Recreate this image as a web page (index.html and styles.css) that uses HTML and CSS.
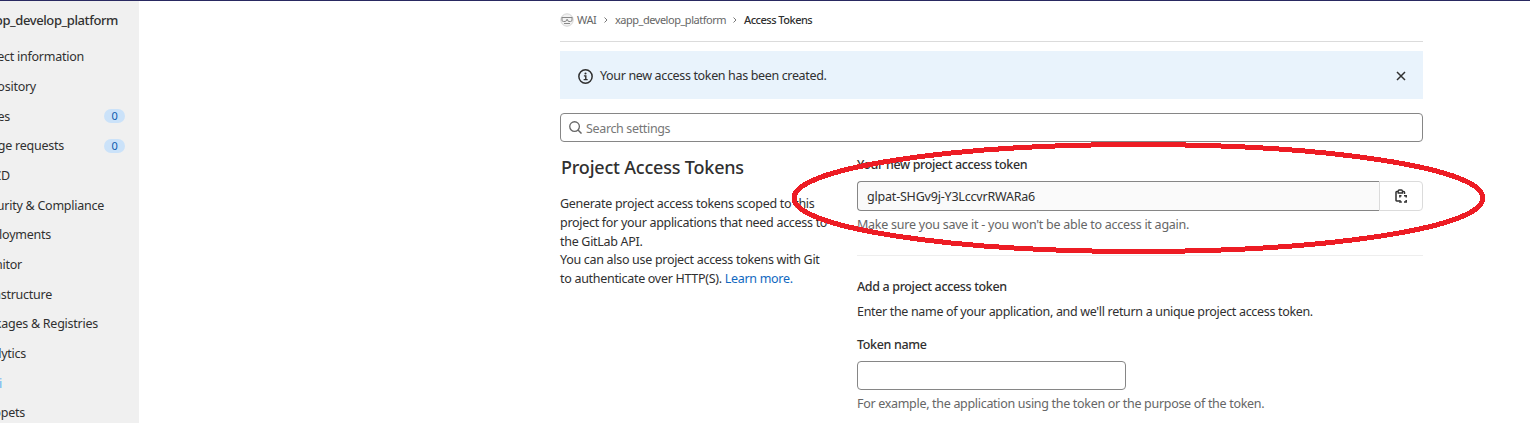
FILE: index.html
```html
<!DOCTYPE html>
<html lang="en">
<head>
<meta charset="utf-8">
<title>Access Tokens</title>
<link rel="stylesheet" href="styles.css">
</head>
<body>
<div class="page">
  <aside class="sidebar">
    <div class="project"><span style="width:118px">xapp_develop_platform</span></div>
    <nav class="nav">
      <a class="item"><span style="width:84px">Project information</span></a>
      <a class="item"><span style="width:36px">Repository</span></a>
      <a class="item"><span style="width:10px">Issues</span><b class="count">0</b></a>
      <a class="item"><span style="width:64px">Merge requests</span><b class="count">0</b></a>
      <a class="item"><span style="width:10px">CI/CD</span></a>
      <a class="item"><span style="width:104px">Security &amp; Compliance</span></a>
      <a class="item"><span style="width:51px">Deployments</span></a>
      <a class="item"><span style="width:22px">Monitor</span></a>
      <a class="item"><span style="width:52px">Infrastructure</span></a>
      <a class="item"><span style="width:98px">Packages &amp; Registries</span></a>
      <a class="item"><span style="width:26px">Analytics</span></a>
      <a class="item current"><span style="width:2px">Wiki</span></a>
      <a class="item"><span style="width:25px">Snippets</span></a>
    </nav>
  </aside>
  <main class="content">
    <nav class="crumbs">
      <svg class="avatar" viewBox="0 0 14 14"><circle cx="7" cy="7" r="6.2" fill="#f2f2f2" stroke="#d4d4d4"/><path d="M1.500 4.500h11M2 5v2.200q0 1.300 1.500 1.300h1.700Q6.500 8.500 6.700 6.500h.8q0 2 1.500 2h1.600Q12 8.500 12 7V5M4 10.500h6" fill="none" stroke="#888"/></svg>
      <span class="c1">WAI</span>
      <svg class="sep" viewBox="0 0 6 8"><path d="M1.500 1.500 4 4 1.500 6.500" fill="none" stroke="#777"/></svg>
      <span class="c2">xapp_develop_platform</span>
      <svg class="sep" viewBox="0 0 6 8"><path d="M1.500 1.500 4 4 1.500 6.500" fill="none" stroke="#777"/></svg>
      <strong class="c3">Access Tokens</strong>
    </nav>
    <div class="alert">
      <svg class="info" viewBox="0 0 16 16"><circle cx="8" cy="8" r="7.100" fill="none" stroke="#303030" stroke-width="1.600"/><path d="M6.300 7.300H8.300V11M6 11.300h4.300" fill="none" stroke="#303030" stroke-width="1.500"/><circle cx="8" cy="4.800" r="1.100" fill="#303030"/></svg>
      <span class="message">Your new access token has been created.</span>
      <svg class="close" viewBox="0 0 10 10"><path d="m1 1 8 8M9 1 1 9" stroke="#303030" stroke-width="1.500"/></svg>
    </div>
    <div class="search">
      <svg class="glass" viewBox="0 0 14 14"><circle cx="6" cy="6" r="5.200" fill="none" stroke="#666" stroke-width="1.400"/><path d="m9.700 9.700 3.800 3.800" stroke="#666" stroke-width="1.600"/></svg>
      <span>Search settings</span>
    </div>
    <div class="columns">
      <section class="about">
        <h4>Project Access Tokens</h4>
        <p>Generate project access tokens scoped to this<br>project for your applications that need access to<br>the GitLab API.<br>You can also use project access tokens with Git<br>to authenticate over HTTP(S). <a>Learn more.</a></p>
      </section>
      <section class="form">
        <h5 class="created">Your new project access token</h5>
        <div class="token">
          <div class="value">glpat-SHGv9j-Y3LccvrRWARa6</div>
          <div class="copy"><svg viewBox="0 0 12 14"><path d="M4 12H1.700Q1 12 1 11.200V3.300Q1 2.500 1.800 2.500H3M8 2.500h.7q.8 0 .8.800V5" fill="none" stroke="#303030" stroke-width="1.500"/><path d="M3.200 4V2q0-1 1-1h2.200q1 0 1 1v2z" fill="none" stroke="#303030" stroke-width="1.300"/><path d="M4.900 8.500V6.700h1.600M9 6.700h2.200v1.800M11.200 11v2H9M6.800 13H4.900v-2" fill="none" stroke="#303030" stroke-width="1.500"/></svg></div>
        </div>
        <p class="hint save">Make sure you save it - you won't be able to access it again.</p>
        <h5 class="add">Add a project access token</h5>
        <p class="enter">Enter the name of your application, and we'll return a unique project access token.</p>
        <h5 class="name">Token name</h5>
        <div class="field"></div>
        <p class="hint example">For example, the application using the token or the purpose of the token.</p>
      </section>
    </div>
  </main>
  <svg class="mark" viewBox="0 0 696 114"><ellipse cx="347.500" cy="57" rx="344.500" ry="53.500"/></svg>
</div>
</body>
</html>
```
FILE: styles.css
```css
* { box-sizing: border-box; }
body { margin: 0; background: #fff; overflow: hidden; }
.page {
  position: relative; display: flex; width: 1530px; height: 423px; overflow: hidden;
  border-top: 1px solid #292961;
  font: 12.5px/19px "Noto Sans", sans-serif; letter-spacing: -0.25px; color: #303030;
}
h4, h5, p { margin: 0; }
h5 { font-size: 12.5px; line-height: 19px; font-weight: 550; letter-spacing: -0.35px; }
svg { display: block; flex: none; }
.sidebar { width: 139px; flex: none; background: #f0f0f0; overflow: hidden; }
.project { height: 41px; padding-top: 10px; font-weight: 550; font-size: 13px; letter-spacing: -0.4px; }
.project span, .item span { display: flex; flex: none; justify-content: flex-end; white-space: nowrap; }
.item { display: flex; align-items: center; justify-content: space-between; height: 29.67px; padding-right: 14px; }
.current { color: #63b5f0; }
.count { width: 21px; height: 14px; border-radius: 7px; background: #cbe2f9; color: #0b5cad; font-size: 11px; line-height: 14px; font-weight: 400; text-align: center; }
.content { width: 863px; margin-left: 421px; }
.crumbs { display: flex; align-items: center; height: 41px; padding-bottom: 3px; border-bottom: 1px solid #dbdbdb; font-size: 11px; color: #666; white-space: nowrap; }
.avatar { width: 14px; height: 14px; margin-right: 3px; }
.c1 { width: 19px; letter-spacing: -0.4px; }
.sep { width: 6px; height: 8px; margin: 0 6px 0 7px; }
.c2 { width: 110px; letter-spacing: -0.48px; }
.c3 { color: #303030; font-weight: 550; letter-spacing: -0.5px; }
.alert { display: flex; align-items: center; height: 48px; margin-top: 9px; padding: 0 17px 0 18px; background: #e9f3fc; }
.info { width: 15px; height: 15px; margin: 2px 7px 0 0; }
.message { flex: 1; letter-spacing: -0.35px; }
.close { width: 10px; height: 10px; margin-top: 2px; }
.search { display: flex; align-items: center; gap: 4px; height: 29px; margin-top: 14px; padding-left: 8px; border: 1px solid #868686; border-radius: 4px; color: #777; letter-spacing: -0.35px; }
.search span { padding-top: 2px; }
.glass { width: 13px; height: 13px; }
.columns { display: flex; }
.about { width: 297px; white-space: nowrap; }
h4 { margin: 13px 0 16px; padding-left: 1px; font-size: 18px; line-height: 24px; font-weight: 550; letter-spacing: -0.2px; }
.about p { line-height: 18.8px; letter-spacing: -0.3px; }
.about a { color: #1068bf; }
.form { width: 566px; }
.created { margin-top: 13px; }
.token { display: flex; height: 30px; margin-top: 7px; }
.value { flex: 1; padding: 5px 9px; border: 1px solid #868686; border-right: 0; border-radius: 4px 0 0 4px; background: #fafafa; letter-spacing: -0.2px; }
.copy { display: flex; align-items: center; justify-content: center; width: 44px; border: 1px solid #dbdbdb; border-radius: 0 4px 4px 0; }
.copy svg { width: 12px; height: 14px; }
.hint { color: #666; }
.save { margin-top: 4px; padding-bottom: 21px; border-bottom: 1px solid #eee; }
.add { margin-top: 21px; }
.enter { margin-top: 6px; letter-spacing: -0.325px; }
.name { margin-top: 14px; }
.field { width: 269px; height: 29px; margin-top: 7px; border: 1px solid #868686; border-radius: 4px; }
.example { margin-top: 4px; letter-spacing: -0.31px; }
.mark { position: absolute; left: 791px; top: 140px; width: 696px; height: 114px; shape-rendering: crispEdges; }
.mark ellipse { fill: none; stroke: #ed1c24; stroke-width: 5px; }
```
